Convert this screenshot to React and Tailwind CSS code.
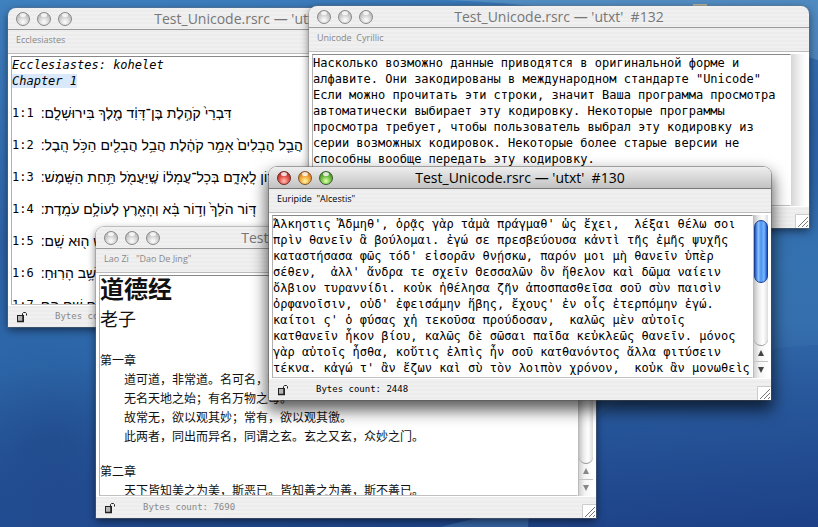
import React from "react";

const GREEK = `Ἄλκηστις Ἄδμηθ', ὁρᾷς γὰρ τἀμὰ πράγμαθ' ὡς ἔχει,  λέξαι θέλω σοι
πρὶν θανεῖν ἃ βούλομαι. ἐγώ σε πρεσβεύουσα κἀντὶ τῆς ἐμῆς ψυχῆς
καταστήσασα φῶς τόδ' εἰσορᾶν θνῄσκω, παρόν μοι μὴ θανεῖν ὑπὲρ
σέθεν,  ἀλλ' ἄνδρα τε σχεῖν Θεσσαλῶν ὃν ἤθελον καὶ δῶμα ναίειν
ὄλβιον τυραννίδι. κοὐκ ἠθέλησα ζῆν ἀποσπασθεῖσα σοῦ σὺν παισὶν
ὀρφανοῖσιν, οὐδ' ἐφεισάμην ἥβης, ἔχους' ἐν οἷς ἐτερπόμην ἐγώ.
καίτοι ς' ὁ φύσας χἡ τεκοῦσα προύδοσαν,  καλῶς μὲν αὐτοῖς
κατθανεῖν ἧκον βίου, καλῶς δὲ σῶσαι παῖδα κεὐκλεῶς θανεῖν. μόνος
γὰρ αὐτοῖς ἦσθα, κοὔτις ἐλπὶς ἦν σοῦ κατθανόντος ἄλλα φιτύσειν
τέκνα. κἀγώ τ' ἂν ἔζων καὶ σὺ τὸν λοιπὸν χρόνον,  κοὐκ ἂν μονωθεὶς`;

const CYRILLIC = `Насколько возможно данные приводятся в оригинальной форме и
алфавите. Они закодированы в международном стандарте "Unicode"
Если можно прочитать эти строки, значит Ваша программа просмотра
автоматически выбирает эту кодировку. Некоторые программы
просмотра требует, чтобы пользователь выбрал эту кодировку из
серии возможных кодировок. Некоторые более старые версии не
способны вообще передать эту кодировку.`;

const VERSES = [
  ["1:1", "דִּבְרֵי֙ קֹהֶ֣לֶת בֶּן־דָּוִ֔ד מֶ֖לֶךְ בִּירוּשָׁלִָֽם:"],
  ["1:2", "הֲבֵ֤ל הֲבָלִים֙ אָמַ֣ר קֹהֶ֔לֶת הֲבֵ֥ל הֲבָלִ֖ים הַכֹּ֥ל הָֽבֶל:"],
  ["1:3", "מַה־יִּתְר֖וֹן לָֽאָדָ֑ם בְּכָל־עֲמָל֔וֹ שֶֽׁיַּעֲמֹ֖ל תַּ֥חַת הַשָּֽׁמֶשׁ:"],
  ["1:4", "דּ֤וֹר הֹלֵךְ֙ וְד֣וֹר בָּ֔א וְהָאָ֖רֶץ לְעוֹלָ֥ם עֹמָֽדֶת:"],
  ["1:5", "וְזָרַ֥ח הַשֶּׁ֖מֶשׁ וּבָ֣א הַשָּׁ֑מֶשׁ ה֖וּא שָֽׁם:"],
  ["1:6", "הוֹלֵךְ֙ אֶל־דָּר֔וֹם וְסוֹבֵ֖ב שָׁ֥ב הָרֽוּחַ:"],
  ["1:7", "כָּל־הַנְּחָלִים֙ הֹלְכִ֣ים אֶל־הַיָּ֔ם שָׁ֛ם הֵ֥ם"],
];

const LIGHTS = {
  off: [
    "bg-[radial-gradient(circle_at_50%_75%,#f6f6f6_10%,#d4d4d4_45%,#a4a4a4_100%)] border-[#888888]",
    "bg-[radial-gradient(circle_at_50%_75%,#f6f6f6_10%,#d4d4d4_45%,#a4a4a4_100%)] border-[#888888]",
    "bg-[radial-gradient(circle_at_50%_75%,#f6f6f6_10%,#d4d4d4_45%,#a4a4a4_100%)] border-[#888888]",
  ],
  on: [
    "bg-[radial-gradient(circle_at_50%_75%,#ffb3a8_5%,#e2544c_45%,#8f1c18_100%)] border-[#6b2826]",
    "bg-[radial-gradient(circle_at_50%_75%,#ffee9a_5%,#f3a83a_45%,#a85a10_100%)] border-[#7d5426]",
    "bg-[radial-gradient(circle_at_50%_75%,#d3ffa0_5%,#72bd45_45%,#2c6d17_100%)] border-[#3a5c2c]",
  ],
};

function Lights({ active }) {
  const tones = active ? LIGHTS.on : LIGHTS.off;
  return (
    <div className="flex gap-[7px]">
      {["Close", "Minimize", "Zoom"].map((name, i) => (
        <button
          key={name}
          aria-label={name}
          className={`relative size-[14px] overflow-hidden rounded-full border ${tones[i]}`}
        >
          <span className="absolute left-[3px] top-0 h-1 w-1.5 rounded-full bg-white/80" />
        </button>
      ))}
    </div>
  );
}

function Lock() {
  return (
    <svg viewBox="0 0 12 12" className="size-3" fill="none" stroke="currentColor">
      <rect x="1.5" y="4.5" width="6" height="6" fill="#b5b5b5" />
      <path d="M6.5 5V2.5L7.5 1.5H9.5L10.5 2.5V4.5" />
      <path d="M7 4.5V10.5M1 10.5H8" strokeWidth="1.5" />
    </svg>
  );
}

function Scroller({ active, thumb }) {
  const tone = active ? "text-[#444444]" : "text-[#888888]";
  return (
    <div className="flex w-[15px] flex-col border-l border-[#bbbbbb] bg-[linear-gradient(to_right,#d2d2d2,#f4f4f4_40%,#ffffff)]">
      <div className="flex flex-1 flex-col rounded-b-full border-b border-[#999999] bg-[linear-gradient(to_right,#c4c4c4,#ededed_35%,#ffffff_65%,#dddddd)] pt-[5px]">
        {thumb && (
          <div className="h-[63px] rounded-full border border-[#1c3f94] bg-[linear-gradient(to_right,#1c53c4,#8cc2ff_28%,#4d94f0_50%,#77b8ff_75%,#1c53c4)]" />
        )}
      </div>
      <button aria-label="Scroll up" className={`flex h-4 items-center justify-center border-b border-[#c4c4c4] ${tone}`}>
        <svg viewBox="0 0 8 7" className="h-[7px] w-2"><path d="M4 0L7 6H1Z" fill="currentColor" /></svg>
      </button>
      <button aria-label="Scroll down" className={`flex h-4 items-center justify-center ${tone}`}>
        <svg viewBox="0 0 8 7" className="h-[7px] w-2"><path d="M4 6L7 0H1Z" fill="currentColor" /></svg>
      </button>
    </div>
  );
}

function Window({ place, title, info, count, active, scroll = "bar", children }) {
  const stripes = "bg-[repeating-linear-gradient(to_bottom,#f0f0f0_0px,#f0f0f0_2px,#ececec_2px,#ececec_4px)]";
  return (
    <section
      className={`absolute flex flex-col overflow-hidden rounded-t-lg ${stripes} ${place} ${
        active
          ? "shadow-[0_0_0_1px_rgba(80,80,80,0.45),0_8px_16px_2px_rgba(0,0,0,0.65)]"
          : "shadow-[0_0_0_1px_rgba(120,120,120,0.35),0_3px_8px_rgba(0,0,0,0.55)]"
      }`}
    >
      <header
        className={`relative flex h-[22px] shrink-0 items-center border-b px-2 ${
          active
            ? "border-[#777777] bg-[linear-gradient(to_bottom,#eeeeee,#d8d8d8_50%,#c2c2c2)] text-black"
            : "border-[#999999] text-[#777777]"
        }`}
      >
        <Lights active={active} />
        <h2 className="absolute inset-x-0 text-center font-['Open_Sans',sans-serif] text-[14px] leading-5 whitespace-pre">
          {title}
        </h2>
      </header>
      <div
        className={`flex h-6 shrink-0 items-center border-b border-[#bbbbbb] px-2 pb-1 font-['Open_Sans',sans-serif] text-[9px] whitespace-pre ${
          active ? "text-black" : "text-[#888888]"
        }`}
      >
        {info}
      </div>
      <div className="flex min-h-0 flex-1 bg-white pt-0.5 pr-[3px] pl-[3px]">
        <div className="flex min-w-0 flex-1 border border-t-[#888888] border-r-transparent border-b-[#c0c0c0] border-l-[#b0b0b0] bg-white">
          {children}
        </div>
        {scroll === "bar" && <Scroller active={active} thumb={active} />}
        {scroll === "empty" && (
          <div className="w-[15px] bg-[linear-gradient(to_right,#d6d6d6,#f6f6f6_70%,#ffffff)]" />
        )}
      </div>
      <footer
        className={`relative flex h-[22px] shrink-0 items-center gap-[27px] border-t border-white pl-2 font-['DejaVu_Sans_Mono',monospace] text-[9px] ${
          active ? "text-black" : "text-[#888888]"
        }`}
      >
        <button aria-label="Unlocked" className="text-[#222222]"><Lock /></button>
        {count && <span>{count}</span>}
        <svg viewBox="0 0 14 14" className="absolute right-0 bottom-0 size-[14px] bg-white" stroke="#777777">
          <path d="M0.5 14V0.5H14" stroke="#cccccc" fill="none" />
          <path d="M3 13L13 3M7 13L13 7M11 13L13 11" />
        </svg>
      </footer>
    </section>
  );
}

const MONO = "font-['DejaVu_Sans_Mono',monospace] text-[12px] leading-4";
const FIELD = `block min-w-0 flex-1 resize-none overflow-hidden whitespace-pre bg-white outline-none ${MONO} text-black`;

export default function App() {
  return (
    <main className="relative h-screen overflow-hidden bg-[linear-gradient(172deg,#3f80bf_0%,#2d62a6_38%,#2d68aa_58%,#234f94_78%,#1d4086_100%)]">
      <svg className="absolute inset-0 size-full" viewBox="0 0 818 527" preserveAspectRatio="none">
        <defs>
          <linearGradient id="beam" x1="0" y1="0" x2="0" y2="1">
            <stop offset="0" stopColor="#5a9ccc" stopOpacity="0" />
            <stop offset="0.6" stopColor="#4a8cc4" stopOpacity="0.4" />
            <stop offset="1" stopColor="#3f80bd" stopOpacity="0.25" />
          </linearGradient>
          <linearGradient id="haze" x1="0" y1="0" x2="0" y2="1">
            <stop offset="0" stopColor="#3c7cb8" stopOpacity="0.35" />
            <stop offset="1" stopColor="#2c60a4" stopOpacity="0" />
          </linearGradient>
          <radialGradient id="shade">
            <stop offset="0" stopColor="#16306c" stopOpacity="0.3" />
            <stop offset="1" stopColor="#16306c" stopOpacity="0" />
          </radialGradient>
        </defs>
        <path d="M290 0C420 -6 640 2 818 60V0Z" fill="#8cc2e0" opacity="0.3" />
        <path d="M596 418C650 375 740 348 818 345V180H596Z" fill="url(#beam)" />
        <path d="M596 418C650 375 740 348 818 345V527H596Z" fill="url(#haze)" />
        <ellipse cx="50" cy="440" rx="120" ry="100" fill="url(#shade)" />
        <path d="M440 527L530 505L528 527Z" fill="#4a80b8" opacity="0.5" />
        <rect x="693" y="4" width="14" height="3" fill="#b9b3a0" />
      </svg>

      <Window
        place="top-2 left-2 h-[319px] w-[502px]"
        title="Test_Unicode.rsrc — 'utxt'  #128"
        info="Ecclesiastes"
        count="Bytes count: 5120"
      >
        <div role="textbox" aria-label="Ecclesiastes" className={`flex-1 overflow-hidden whitespace-nowrap ${MONO}`}>
          <p className="italic">Ecclesiastes: kohelet</p>
          <p className="mb-4 italic"><span className="bg-[#d9e8fb]">Chapter 1</span></p>
          {VERSES.map(([ref, verse]) => (
            <p key={ref} className="mb-4 flex h-4 gap-[7px]">
              <span>{ref}</span>
              <bdi dir="rtl" lang="he" className="font-['Liberation_Sans','DejaVu_Sans',sans-serif] text-[14px]">{verse}</bdi>
            </p>
          ))}
        </div>
      </Window>

      <Window
        place="top-1.5 left-[309px] h-[222px] w-[500px]"
        title="Test_Unicode.rsrc — 'utxt'  #132"
        info="Unicode  Cyrillic"
        scroll="empty"
      >
        <textarea aria-label="Unicode Cyrillic" className={FIELD} defaultValue={CYRILLIC} spellCheck={false} />
      </Window>

      <Window
        place="top-[227px] left-24 h-[291px] w-[500px]"
        title="Test_Unicode.rsrc — 'utxt'  #129"
        info={'Lao Zi   "Dao De Jing"'}
        count="Bytes count: 7690"
      >
        <div
          role="textbox"
          aria-label="Dao De Jing"
          lang="zh-Hans"
          className="flex-1 overflow-hidden whitespace-nowrap font-['Noto_Sans_CJK_SC',sans-serif] text-[12px] leading-[19px] text-[#111111]"
        >
          <p className="text-[24px] leading-6 font-bold">道德经</p>
          <p className="mb-3.5 text-[18px] leading-9">老子</p>
          <p>第一章</p>
          <div className="mb-4 pl-6">
            <p>道可道，非常道。名可名，非常名。</p>
            <p>无名天地之始；有名万物之母。</p>
            <p>故常无，欲以观其妙；常有，欲以观其徼。</p>
            <p>此两者，同出而异名，同谓之玄。玄之又玄，众妙之门。</p>
          </div>
          <p>第二章</p>
          <p className="pl-6">天下皆知美之为美，斯恶已。皆知善之为善，斯不善已。</p>
        </div>
      </Window>

      <Window
        active
        place="top-[167px] left-[269px] h-[233px] w-[502px]"
        title="Test_Unicode.rsrc — 'utxt'  #130"
        info={'Euripide  "Alcestis"'}
        count="Bytes count: 2448"
      >
        <textarea aria-label="Euripide Alcestis" className={FIELD} defaultValue={GREEK} spellCheck={false} />
      </Window>
    </main>
  );
}
